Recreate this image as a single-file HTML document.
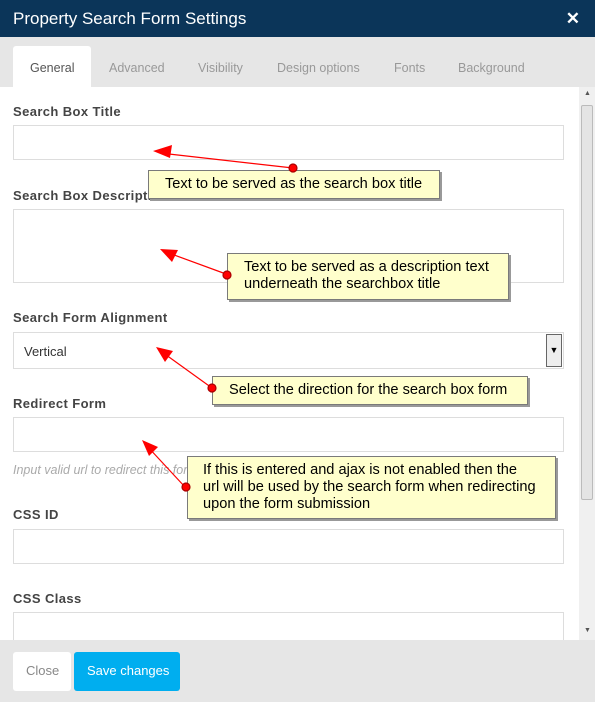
<!DOCTYPE html>
<html><head><style>
*{box-sizing:border-box;margin:0;padding:0}
body{width:595px;height:702px;position:relative;overflow:hidden;font-family:"Liberation Sans",sans-serif;background:#fff}
.a{position:absolute}
.hdr{left:0;top:0;width:595px;height:37px;background:#0b3559;color:#fff;font-size:17px;padding:9px 0 0 13px}
.x{right:15px;top:9px;color:#fff;font-size:17px;font-weight:bold}
.tabs{left:0;top:37px;width:595px;height:50px;background:#e6e6e6}
.tab{top:61px;font-size:12.5px;color:#999}
.act{left:13px;top:46px;width:78px;height:41px;background:#fff;border-radius:3px 3px 0 0;font-size:12.5px;color:#555;padding:15px 0 0 17px}
.lbl{left:13px;font-size:13px;font-weight:bold;color:#444;letter-spacing:0.4px}
.inp{left:13px;width:551px;border:1px solid #ddd;background:#fff}
.co{background:#ffffcc;border:1px solid #7a7a7a;box-shadow:2px 2px 0 #999;font-size:14.6px;color:#000;line-height:17px}
.foot{left:0;top:640px;width:595px;height:62px;background:#e6e6e6}
</style></head><body>
<div class="a hdr">Property Search Form Settings</div>
<div class="a x">✕</div>
<div class="a tabs"></div>
<div class="a act">General</div>
<div class="a tab" style="left:109px">Advanced</div>
<div class="a tab" style="left:198px">Visibility</div>
<div class="a tab" style="left:277px">Design options</div>
<div class="a tab" style="left:394px">Fonts</div>
<div class="a tab" style="left:458px">Background</div>
<div class="a" style="left:579px;top:87px;width:16px;height:553px;background:#f0f0f0"></div>
<div class="a" style="left:581px;top:105px;width:12px;height:395px;background:#e4e4e4;border:1px solid #bbb;border-radius:2px"></div>
<div class="a" style="left:584px;top:90px;font-size:7px;color:#555">▲</div>
<div class="a" style="left:584px;top:627px;font-size:7px;color:#555">▼</div>

<div class="a lbl" style="top:104px">Search Box Title</div>
<div class="a inp" style="top:125px;height:35px"></div>
<div class="a lbl" style="top:188px">Search Box Description</div>
<div class="a inp" style="top:209px;height:74px"></div>
<div class="a lbl" style="top:310px">Search Form Alignment</div>
<div class="a inp" style="top:332px;height:37px;font-size:13px;color:#333;padding:11px 0 0 10px">Vertical</div>
<div class="a" style="left:546px;top:334px;width:16px;height:33px;background:#eee;border:1px solid #666;font-size:9px;text-align:center;padding-top:10px">▼</div>
<div class="a lbl" style="top:396px">Redirect Form</div>
<div class="a inp" style="top:417px;height:35px"></div>
<div class="a" style="left:13px;top:463px;font-size:12.5px;font-style:italic;color:#aaa">Input valid url to redirect this form</div>
<div class="a lbl" style="top:507px">CSS ID</div>
<div class="a inp" style="top:529px;height:35px"></div>
<div class="a lbl" style="top:591px">CSS Class</div>
<div class="a inp" style="top:612px;height:35px"></div>

<div class="a foot"></div>
<div class="a" style="left:13px;top:652px;width:58px;height:39px;background:#fff;border-radius:3px;color:#888;font-size:13px;padding:11px 0 0 13px">Close</div>
<div class="a" style="left:74px;top:652px;width:106px;height:39px;background:#00aeef;border-radius:3px;color:#fff;font-size:13px;padding:11px 0 0 13px">Save changes</div>

<div class="a co" style="left:148px;top:170px;width:292px;height:29px;padding:5px 0 0 16px">Text to be served as the search box title</div>
<div class="a co" style="left:227px;top:253px;width:282px;height:47px;padding:5px 0 0 16px">Text to be served as a description text<br>underneath the searchbox title</div>
<div class="a co" style="left:212px;top:376px;width:316px;height:29px;padding:5px 0 0 16px">Select the direction for the search box form</div>
<div class="a co" style="left:187px;top:456px;width:369px;height:63px;padding:5px 0 0 15px">If this is entered and ajax is not enabled then the<br>url will be used by the search form when redirecting<br>upon the form submission</div>

<svg class="a" style="left:0;top:0" width="595" height="702">
<g stroke="#f00" stroke-width="1.2" fill="#f00">
<line x1="293" y1="168" x2="160" y2="153"/><polygon points="153,151 172,145 170,158" stroke="none"/><circle cx="293" cy="168" r="4" stroke="#a00"/>
<line x1="226" y1="274" x2="166" y2="252"/><polygon points="160,249 178,250 172,262" stroke="none"/><circle cx="227" cy="275" r="4" stroke="#a00"/>
<line x1="212" y1="388" x2="162" y2="352"/><polygon points="156,347 173,351 165,362" stroke="none"/><circle cx="212" cy="388" r="4" stroke="#a00"/>
<line x1="185" y1="487" x2="147" y2="446"/><polygon points="142,440 158,447 149,456" stroke="none"/><circle cx="186" cy="487" r="4" stroke="#a00"/>
</g></svg>
</body></html>
